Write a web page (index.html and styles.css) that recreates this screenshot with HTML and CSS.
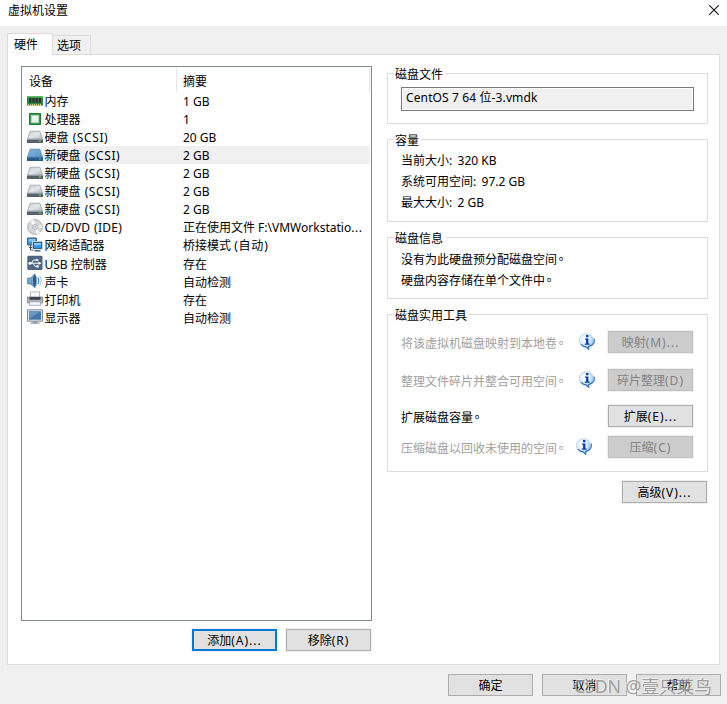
FILE: index.html
```html
<!DOCTYPE html>
<html lang="zh-CN">
<head>
<meta charset="utf-8">
<title>虚拟机设置</title>
<link rel="stylesheet" href="styles.css">
</head>
<body>
<svg class="defs" aria-hidden="true">
  <defs>
    <linearGradient id="g-blue" x1="0" y1="0" x2="1" y2="1"><stop offset="0" stop-color="#9cc4e0"/><stop offset="1" stop-color="#3d7aae"/></linearGradient>
    <linearGradient id="g-top" x1="0" y1="0" x2="1" y2="1"><stop offset="0" stop-color="#83b3de"/><stop offset="1" stop-color="#5c97cb"/></linearGradient>
    <linearGradient id="g-grey" x1="0" y1="0" x2="1" y2="1"><stop offset="0" stop-color="#c4cbd3"/><stop offset=".5" stop-color="#e3e7eb"/><stop offset="1" stop-color="#b3bbc4"/></linearGradient>
    <radialGradient id="g-info" cx=".4" cy=".35" r=".75"><stop offset="0" stop-color="#fff"/><stop offset=".5" stop-color="#dceffd"/><stop offset="1" stop-color="#74b0e8"/></radialGradient>
    <symbol id="disk" viewBox="0 0 16 16">
      <path d="M3.2 2.2h9.6l2.7 7.8H.5z" fill="url(#g-grey)" stroke="#98a1aa" stroke-width=".8"/>
      <path d="M0 10h16v4H0z" fill="#56616e"/><path d="M0 10h16v1H0z" fill="#8d98a5"/><path d="M12 11.4h1.8v1.2H12z" fill="#a6e86a"/>
    </symbol>
    <symbol id="disk-on" viewBox="0 0 16 16">
      <path d="M3.2 2.2h9.6l2.7 7.8H.5z" fill="url(#g-top)" stroke="#4c86bd" stroke-width=".8"/>
      <path d="M0 10h16v4H0z" fill="#2c5a88"/><path d="M0 10h16v1H0z" fill="#4478a8"/><path d="M12 11.4h1.8v1.2H12z" fill="#63c678"/>
    </symbol>
    <symbol id="info" viewBox="0 0 16 17">
      <path d="M8 .7a7.2 6.8 0 0 0-3.5 13L6.6 14 9.6 16.6 9.8 13.7A7.2 6.8 0 0 0 8 .7z" fill="url(#g-info)" stroke="#a9c6e4" stroke-width=".7"/>
      <path d="M2 11.2q2 2.5 5 2.6L9.6 16.2V13.5Q13.8 12.6 15.2 9V5.5" fill="none" stroke="#2f72bd" stroke-width="1.2"/>
      <path d="M7 2h2.4v2.2H7zM6 5.6h3.4v4.9h1.2v1.2H5.8v-1.2h1.3V6.8H6z" fill="#0a3cb0"/>
    </symbol>
  </defs>
</svg>

<header class="titlebar">
  <h1>虚拟机设置</h1>
  <svg class="close" viewBox="0 0 10 10"><path d="M.3.3l9.4 9.4M9.7.3L.3 9.7" stroke="#111" stroke-width="1.1"/></svg>
</header>

<nav class="tabs">
  <span class="tab active">硬件</span>
  <span class="tab">选项</span>
</nav>

<main class="page">
  <div class="left">
    <div class="list">
      <div class="list-head"><span>设备</span><span>摘要</span></div>
      <div class="row"><svg viewBox="0 0 16 16"><path d="M0 3h16v9.5H0z" fill="#30883b"/><path d="M0 3h16v1.5H0z" fill="#62b865"/><path d="M2 5h2.5v4.8H2zM5.2 5h2.5v4.8H5.2zM8.4 5h2.5v4.8H8.4zM11.6 5h2.5v4.8h-2.5z" fill="#303538"/><path d="M1 11.8h14" stroke="#d6d982" stroke-width="1.5" stroke-dasharray="1 1"/></svg><span>内存</span><span>1 GB</span></div>
      <div class="row"><svg viewBox="0 0 16 16"><path d="M2.5 2.5h11v11h-11z" fill="#37a34a" stroke="#23733a"/><path d="M4.5 4.5h7v7h-7z" fill="#f2f2f0" stroke="#b9d1b7"/></svg><span>处理器</span><span>1</span></div>
      <div class="row"><svg><use href="#disk"/></svg><span>硬盘 <i class="scsi">(SCSI)</i></span><span>20 GB</span></div>
      <div class="row selected"><svg><use href="#disk-on"/></svg><span>新硬盘 <i class="scsi">(SCSI)</i></span><span>2 GB</span></div>
      <div class="row"><svg><use href="#disk"/></svg><span>新硬盘 <i class="scsi">(SCSI)</i></span><span>2 GB</span></div>
      <div class="row"><svg><use href="#disk"/></svg><span>新硬盘 <i class="scsi">(SCSI)</i></span><span>2 GB</span></div>
      <div class="row"><svg><use href="#disk"/></svg><span>新硬盘 <i class="scsi">(SCSI)</i></span><span>2 GB</span></div>
      <div class="row"><svg viewBox="0 0 16 16"><circle cx="8" cy="8" r="7.4" fill="#d3d6da" stroke="#9a9ea4" stroke-width=".8"/><path d="M8 8L3 2.6A7 7 0 0 1 7 1zM8 8l5 5.4A7 7 0 0 1 9.5 15z" fill="#fff"/><path d="M8 8l6.8-2A7 7 0 0 1 15 9z" fill="#eceef0"/><circle cx="8" cy="8" r="2.5" fill="#eef0f2" stroke="#a0a4aa" stroke-width=".7"/><circle cx="8" cy="8" r="1" fill="#fff" stroke="#888" stroke-width=".5"/></svg><span>CD/DVD <i class="ide">(IDE)</i></span><span>正在使用文件 F:\VMWorkstatio<i class="dots">...</i></span></div>
      <div class="row"><svg viewBox="0 0 16 16"><path d="M.6 1h8.8v7H.6z" fill="#3c9ae0" stroke="#35516d"/><path d="M1.5 2h7v2.5h-7z" fill="#7fc4f5"/><path d="M2 10.5h3M3.5 8v5h3" fill="none" stroke="#35516d"/><path d="M5.5 4.5h10v7.6h-10z" fill="#3798e6" stroke="#dfe7ee"/><path d="M6.3 5.3h8.4v6H6.3z" fill="#3ba0ec" stroke="#294e76"/><path d="M7 6h7v2H7z" fill="#86caf7"/><path d="M7.5 13.8h6" stroke="#35516d" stroke-width="1.3"/></svg><span>网络适配器</span><span>桥接模式 <i class="auto">(自动)</i></span></div>
      <div class="row low"><svg viewBox="0 0 16 16"><rect x=".3" y=".8" width="15.2" height="14.2" rx="1.2" fill="#4c6684"/><path d="M2 8.2h10M4.5 8l2-3H9M6 8.3l2 3h2" stroke="#fff" fill="none"/><circle cx="3" cy="8.2" r="1.5" fill="#fff"/><path d="M11.5 6.4l3 1.8-3 1.8zM9 3.9h2.2v2.2H9zM9.5 10.3h2.2v2.2H9.5z" fill="#fff"/></svg><span>USB 控制器</span><span>存在</span></div>
      <div class="row low"><svg viewBox="0 0 16 16"><path d="M.7 5.2h2.6L8 .9v13.7L3.3 10.8H.7z" fill="url(#g-blue)" stroke="#36658f" stroke-width=".8"/><ellipse cx="7.6" cy="7.8" rx="2.1" ry="6.6" fill="#295c89" stroke="#93b8d5" stroke-width=".8"/><path d="M10.8 4.5q2 3.3 0 6.6" fill="none" stroke="#3189c9" stroke-width="1.1"/><path d="M12.6 2.7q3.3 5 0 10" fill="none" stroke="#9cbfd8"/></svg><span>声卡</span><span>自动检测</span></div>
      <div class="row low"><svg viewBox="0 0 16 16"><path d="M3.5.8h9v6h-9z" fill="#f7f8fa" stroke="#a4a9b0" stroke-width=".8"/><path d="M.5 6h15v6H.5z" fill="#aeb3bb" stroke="#7c818a" stroke-width=".8"/><path d="M2.5 6h11v2.8h-11z" fill="#3d424b"/><path d="M3 10.7h10l1 3.6H2z" fill="#f4f5f8" stroke="#9b9fae" stroke-width=".8"/></svg><span>打印机</span><span>存在</span></div>
      <div class="row low"><svg viewBox="0 0 16 16"><path d="M.5.8h15v11.4H.5z" fill="#dbe2e8" stroke="#7d8b98"/><path d="M2 2.3h12v8.4H2z" fill="#4679a8"/><path d="M2 2.3h12L2 9.7z" fill="#6796be"/><path d="M6 12.3h4v1.3h2.5v1.2h-9v-1.2H6z" fill="#8d98a3"/></svg><span>显示器</span><span>自动检测</span></div>
    </div>
    <div class="list-actions">
      <button class="btn primary">添加<i>(A)...</i></button>
      <button class="btn">移除<i>(R)</i></button>
    </div>
  </div>

  <div class="right">
    <section class="group file">
      <h2>磁盘文件</h2>
      <div class="field">CentOS 7 64 位-3.vmdk</div>
    </section>
    <section class="group capacity">
      <h2>容量</h2>
      <p>当前大小<i class="colon">:</i> 320 KB</p>
      <p>系统可用空间<i class="colon">:</i> 97.2 GB</p>
      <p>最大大小<i class="colon">:</i> 2 GB</p>
    </section>
    <section class="group details">
      <h2>磁盘信息</h2>
      <p>没有为此硬盘预分配磁盘空间<span class="stop" lang="zh-TW">。</span></p>
      <p>硬盘内容存储在单个文件中<span class="stop" lang="zh-TW">。</span></p>
    </section>
    <section class="group tools">
      <h2>磁盘实用工具</h2>
      <div class="tool map off"><p>将该虚拟机磁盘映射到本地卷<span class="stop" lang="zh-TW">。</span></p><svg><use href="#info"/></svg><button class="btn" disabled>映射<i>(M)...</i></button></div>
      <div class="tool defrag off"><p>整理文件碎片并整合可用空间<span class="stop" lang="zh-TW">。</span></p><svg><use href="#info"/></svg><button class="btn" disabled>碎片整理<i>(D)</i></button></div>
      <div class="tool expand"><p>扩展磁盘容量<span class="stop" lang="zh-TW">。</span></p><button class="btn">扩展<i>(E)...</i></button></div>
      <div class="tool compact off"><p>压缩磁盘以回收未使用的空间<span class="stop" lang="zh-TW">。</span></p><svg><use href="#info"/></svg><button class="btn" disabled>压缩<i>(C)</i></button></div>
    </section>
    <button class="btn advanced">高级<i>(V)...</i></button>
  </div>
</main>

<footer class="footer">
  <button class="btn">确定</button>
  <button class="btn">取消</button>
  <button class="btn">帮助</button>
  <span class="watermark">CSDN @壹只菜鸟</span>
</footer>
</body>
</html>
```
FILE: styles.css
```css
* { box-sizing: border-box; }
body {
  margin: 0;
  width: 727px;
  height: 704px;
  overflow: hidden;
  background: #f0f0f0;
  color: #000;
  font: 12px/18px "Noto Sans", "Noto Sans CJK SC", sans-serif;
  white-space: nowrap;
}
h1, h2, p { margin: 0; font-size: 12px; font-weight: 400; }
i { font-style: normal; }
.defs { position: absolute; width: 0; height: 0; }

.titlebar {
  display: flex;
  justify-content: space-between;
  height: 26px;
  padding: 2px 8px 0;
  background: #fff;
}
.close { width: 10px; height: 10px; margin-top: 3px; }

.tabs { display: flex; align-items: flex-end; height: 28px; padding-left: 7px; }
.tab {
  width: 38px;
  height: 19px;
  padding-left: 4px;
  border: 1px solid #dcdcdc;
  border-width: 1px 1px 0 0;
  line-height: 20px;
}
.tab.active {
  position: relative;
  z-index: 1;
  width: 46px;
  height: 22px;
  margin-bottom: -1px;
  padding-left: 6px;
  border-left-width: 1px;
  line-height: 21px;
  background: #fff;
}

.page {
  display: flex;
  width: 713px;
  height: 611px;
  margin-left: 7px;
  padding: 11px 11px 0 13px;
  border: 1px solid #dcdcdc;
  background: #fff;
}
.left { width: 351px; }
.list { height: 555px; padding: 1px 1px 0 0; border: 1px solid #828790; }
.list-head {
  display: grid;
  grid-template-columns: 155px 193px;
  height: 24px;
  line-height: 28px;
}
.list-head span { height: 24px; padding-left: 7px; border-right: 1px solid #e5e5e5; }
.list-head span:last-child { padding-left: 6px; }
.row {
  display: grid;
  grid-template-columns: 21px 134px 1fr;
  height: 18px;
}
.row svg { width: 16px; height: 16px; margin: 1px 0 0 5px; }
.row span { height: 18px; padding: 1px 0 0 1.5px; overflow: hidden; }
.row.low span { padding-top: 2px; }
.row span:last-child { padding-left: 6px; }
.selected span { background: #f0f0f0; }
.scsi { margin-left: 1px; letter-spacing: .6px; }
.ide { margin-left: 1px; letter-spacing: .3px; }
.auto { letter-spacing: .8px; }
.dots { letter-spacing: .6px; }
.colon { letter-spacing: 2.2px; }
.list-actions { display: flex; justify-content: flex-end; gap: 9px; margin-top: 8px; padding-right: 1px; }

.btn {
  width: 85px;
  height: 22px;
  padding: 2px 0 0;
  border: 1px solid #adadad;
  outline: 1px solid #f1f1f1;
  background: #e1e1e1;
  color: #000;
  font: 12px/18px "Noto Sans", "Noto Sans CJK SC", sans-serif;
  text-align: center;
}
.btn i { letter-spacing: 1px; }
.btn.primary { padding-top: 1px; border: 2px solid #0078d7; }
.btn:disabled { border-color: #bfbfbf; background: #ccc; color: #838383; }

.right { width: 321px; margin-left: 15px; padding-top: 7px; }
.group { border: 1px solid #dcdcdc; padding-left: 13px; }
.group h2 {
  width: max-content;
  height: 18px;
  margin: -9px 0 0 -7px;
  padding: 1px 2px 0 1px;
  background: #fff;
}
.file { height: 51px; }
.field {
  width: 293px;
  height: 24px;
  margin-top: 4px;
  padding: 1px 4px;
  border: 1px solid #7a7a7a;
  box-shadow: inset 0 0 0 1px #fff;
  background: #f0f0f0;
  letter-spacing: .12px;
}
.capacity { height: 83px; margin-top: 15px; }
.capacity p, .details p { height: 21px; line-height: 21px; }
.capacity h2 + p { margin-top: 1px; }
.details { height: 62px; margin-top: 15px; }
.details h2 + p { margin-top: 2px; }
.stop { margin-left: -2px; font-family: "Noto Sans CJK TC", sans-serif; line-height: 1; }
.tools { height: 158px; margin-top: 15px; }
.tool { display: grid; grid-template-columns: 178px 29px 85px; height: 22px; }
.tool p { line-height: 25px; }
.tool svg { width: 16px; height: 17px; margin-top: 2px; }
.tool .btn { grid-column: 3; }
.off p { color: #a0a0a0; }
.map { margin-top: 7px; }
.defrag { margin-top: 16px; }
.expand { margin-top: 14px; }
.compact { margin-top: 9px; }
.compact svg { margin-left: -3px; }
.advanced { display: block; margin: 9px 0 0 235px; }

.footer { position: relative; display: flex; justify-content: flex-end; gap: 9px; padding: 9px 6px 0 0; }
.watermark {
  position: absolute;
  top: 9px;
  left: 574px;
  color: rgba(140, 140, 140, .8);
  font-size: 17.6px;
  line-height: 24px;
  text-shadow: -1px -1px 0 rgba(255, 255, 255, .5);
}
```
